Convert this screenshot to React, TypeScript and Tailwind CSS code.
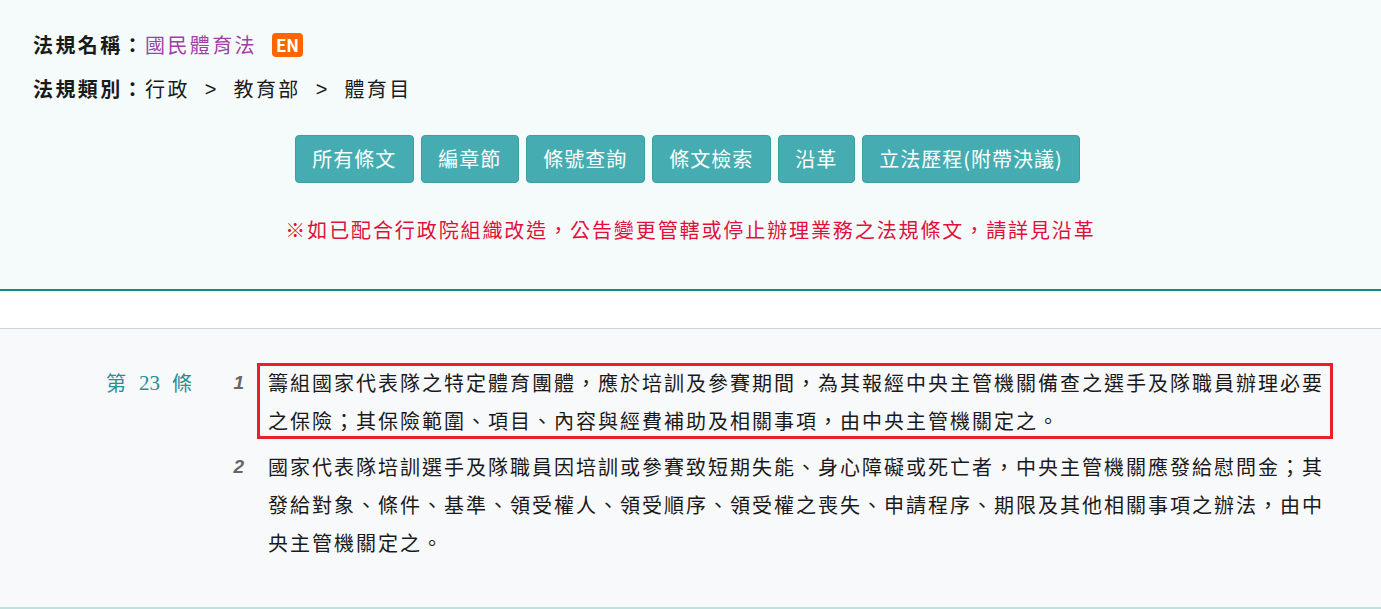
import React from 'react';

const cjk = { fontFamily: '"Noto Sans CJK TC", "Noto Sans", sans-serif' };

const buttons = ['所有條文', '編章節', '條號查詢', '條文檢索', '沿革', '立法歷程(附帶決議)'];

function Sep() {
  return <span className="ml-[15px] mr-[17px] tracking-normal" style={{ fontFamily: '"Liberation Sans", sans-serif' }}>&gt;</span>;
}

export default function App() {
  return (
    <div className="min-h-[609px] w-[1381px] bg-white text-[#1a1a1a]" style={cjk}>
      {/* 法規資訊 */}
      <section className="border-b-2 border-[#178686] bg-[#f5fbfb] pb-[44px] pt-[23px] shadow-[0_4px_0_#e6f2f1]">
        <div className="px-[33px] text-[20px] tracking-[2.4px]">
          <div className="flex h-[44px] items-center">
            <span className="font-semibold">法規名稱：</span>
            <span className="text-[#a13fa7]">國民體育法</span>
            <span className="ml-[15px] flex h-[24px] w-[31px] items-center justify-center rounded-[4px] bg-[#ff6600] text-[17px] font-bold tracking-normal text-white">
              EN
            </span>
          </div>
          <div className="flex h-[44px] items-center">
            <span className="font-semibold">法規類別：</span>
            <span>行政</span>
            <Sep />
            <span>教育部</span>
            <Sep />
            <span>體育目</span>
          </div>
        </div>

        <div className="mt-[24px] flex justify-center gap-[7px] pr-[6px]">
          {buttons.map((b) => (
            <button
              key={b}
              className="h-[48px] rounded-[4px] border border-[#3b9ea2] bg-[#45adb1] px-[16.5px] text-[20px] tracking-[1px] text-white"
            >
              {b}
            </button>
          ))}
        </div>

        <p className="mt-[32px] text-center text-[20px] leading-[30px] tracking-[1.9px] text-[#e0103a]">
          ※如已配合行政院組織改造，公告變更管轄或停止辦理業務之法規條文，請詳見沿革
        </p>
      </section>

      <div className="h-[38px] border-b border-[#c6d6d6] bg-white" />

      {/* 條文內容 */}
      <section className="min-h-[280px] border-b-2 border-[#bfe0df] bg-[#f8f9fa] pb-[40px] pt-[35px]">
        <div className="flex">
          <div className="flex w-[192px] shrink-0 justify-end text-[20px] leading-[38px] text-[#2b8d92]">
            <span>第</span>
            <span className="ml-[13px] mr-[12px] text-[21px]" style={{ fontFamily: '"Liberation Serif", serif' }}>23</span>
            <span>條</span>
          </div>
          <div className="flex-1 pr-[56px]">
            <div className="flex">
              <span className="w-[52px] shrink-0 text-right text-[19px] font-bold italic leading-[38px] text-[#666]" style={{ fontFamily: '"Liberation Sans", sans-serif' }}>
                1
              </span>
              <div className="relative ml-[24px] flex-1 text-[20px] leading-[38px] tracking-[2px]">
                <span className="pointer-events-none absolute bottom-[1px] -left-[11px] -right-[8px] -top-[1px] border-[3px] border-[#e8202a]" />
                籌組國家代表隊之特定體育團體，應於培訓及參賽期間，為其報經中央主管機關備查之選手及隊職員辦理必要之保險；其保險範圍、項目、內容與經費補助及相關事項，由中央主管機關定之。
              </div>
            </div>
            <div className="mt-[8px] flex">
              <span className="w-[52px] shrink-0 text-right text-[19px] font-bold italic leading-[38px] text-[#666]" style={{ fontFamily: '"Liberation Sans", sans-serif' }}>
                2
              </span>
              <div className="ml-[24px] flex-1 text-[20px] leading-[38px] tracking-[2px]">
                國家代表隊培訓選手及隊職員因培訓或參賽致短期失能、身心障礙或死亡者，中央主管機關應發給慰問金；其發給對象、條件、基準、領受權人、領受順序、領受權之喪失、申請程序、期限及其他相關事項之辦法，由中央主管機關定之。
              </div>
            </div>
          </div>
        </div>
      </section>
    </div>
  );
}
